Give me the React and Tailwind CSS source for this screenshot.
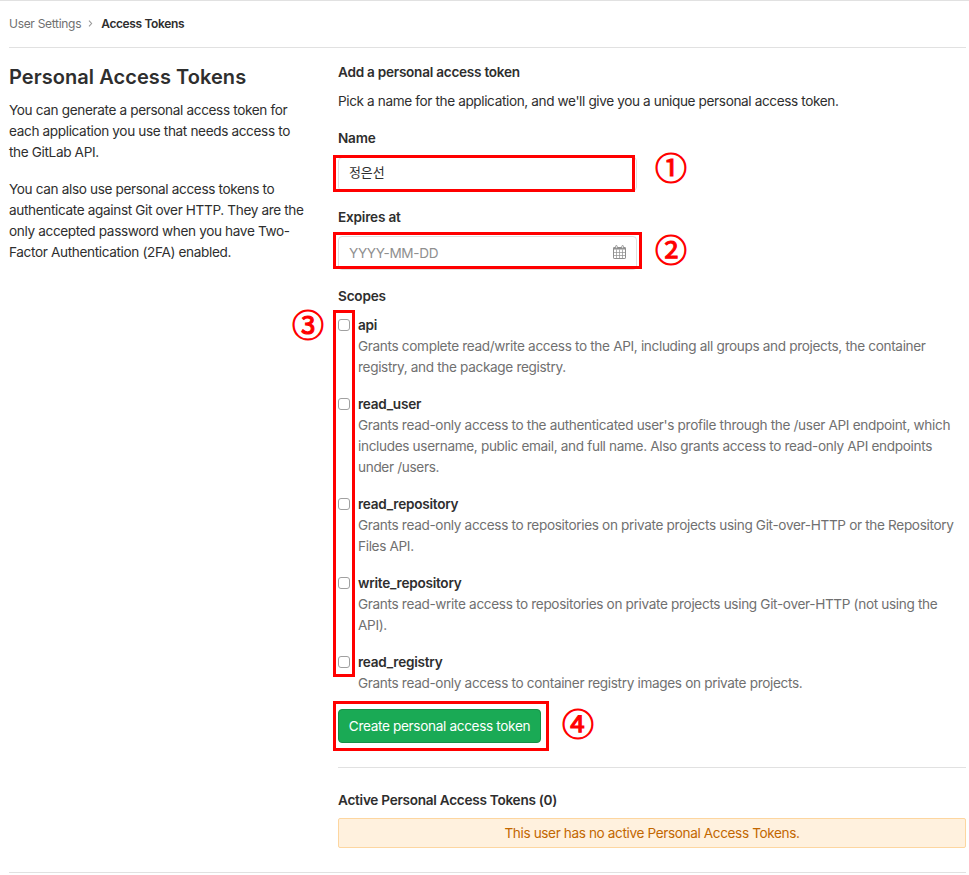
const scopes = [
  { name: "api", lines: ["Grants complete read/write access to the API, including all groups and projects, the container", "registry, and the package registry."] },
  { name: "read_user", lines: ["Grants read-only access to the authenticated user's profile through the /user API endpoint, which", "includes username, public email, and full name. Also grants access to read-only API endpoints", "under /users."] },
  { name: "read_repository", lines: ["Grants read-only access to repositories on private projects using Git-over-HTTP or the Repository", "Files API."] },
  { name: "write_repository", lines: ["Grants read-write access to repositories on private projects using Git-over-HTTP (not using the", "API)."] },
  { name: "read_registry", lines: ["Grants read-only access to container registry images on private projects."] },
];

function Lines({ lines }) {
  return lines.map((line) => (
    <span key={line} className="block whitespace-nowrap">{line}</span>
  ));
}

function CalendarIcon() {
  return (
    <svg className="mb-[2px]" width="13" height="14" viewBox="0 0 13 14" fill="none" stroke="#8f8f8f">
      <rect x="0.5" y="2.5" width="12" height="11" rx="0.6" />
      <path d="M1 7.5h11M1 10.5h11M3.5 4.5v9M6.5 4.5v9M9.5 4.5v9" strokeWidth="0.7" />
      <path d="M0.5 3.5h12" strokeWidth="2" />
      <rect x="2.6" y="0.5" width="1.6" height="3" rx="0.8" fill="#fff" strokeWidth="0.9" />
      <rect x="8.8" y="0.5" width="1.6" height="3" rx="0.8" fill="#fff" strokeWidth="0.9" />
    </svg>
  );
}

function Marker({ children, className }) {
  return (
    <span className={`absolute size-8 text-center font-['Noto_Sans_CJK_KR',sans-serif] text-[32px] leading-8 font-normal tracking-normal text-[#ff0000] [-webkit-text-stroke:1px_#ff0000] ${className}`}>
      {children}
    </span>
  );
}

export default function App() {
  return (
    <div className="relative h-[875px] w-[969px] overflow-hidden border-t border-[#e1e1e1] bg-white pr-[3px] pl-[9px] font-[Inter,'Noto_Sans_CJK_KR',sans-serif] text-[13.6px] leading-[21px] tracking-[-0.34px] text-[#2e2e2e]">
      <nav className="flex h-[47px] items-center border-b border-[#e1e1e1] pb-px text-[12px]">
        <span className="tracking-[-0.3px] text-[#707070]">User Settings</span>
        <svg className="mr-[8px] ml-[7px]" width="5" height="7" viewBox="0 0 5 7" fill="none" stroke="#999" strokeWidth="1.1">
          <path d="M1 0.7l2.6 2.8L1 6.3" />
        </svg>
        <span className="font-semibold tracking-[-0.37px]">Access Tokens</span>
      </nav>

      <div className="flex h-[825px] border-b border-[#e1e1e1]">
        <aside className="w-[329px] pt-4">
          <h4 className="text-[20px] leading-[26px] font-semibold tracking-[0.06px]">Personal Access Tokens</h4>
          <p className="mt-[10px] tracking-[-0.36px]">
            <Lines lines={["You can generate a personal access token for", "each application you use that needs access to", "the GitLab API."]} />
          </p>
          <p className="mt-4 tracking-[-0.36px]">
            <Lines lines={["You can also use personal access tokens to", "authenticate against Git over HTTP. They are the", "only accepted password when you have Two-", "Factor Authentication (2FA) enabled."]} />
          </p>
        </aside>

        <main className="flex w-[628px] flex-col pt-[14px]">
          <h5 className="font-semibold tracking-[-0.26px]">Add a personal access token</h5>
          <p className="mt-2 tracking-[-0.38px] whitespace-nowrap">Pick a name for the application, and we'll give you a unique personal access token.</p>

          <div className="mt-4 font-semibold tracking-[-0.2px]">Name</div>
          <div className="relative mt-2 flex h-[34px] w-[299px] items-center rounded border border-[#dfdfdf] px-[10px] pb-[3px] text-[13px] tracking-[-0.1px]">
            정은선
            <div className="absolute -top-[3px] -left-[6px] h-[37px] w-[302px] border-3 border-[#ff0000]" />
            <Marker className="-top-[8px] left-[316px]">①</Marker>
          </div>

          <div className="mt-[16px] font-semibold tracking-[-0.2px]">Expires at</div>
          <div className="relative mt-2 flex h-[34px] w-[299px] items-center justify-between rounded border border-[#dfdfdf] pr-[10px] pl-[10px] text-[#8f8f8f]">
            YYYY-MM-DD
            <CalendarIcon />
            <div className="absolute -top-[5px] -left-[6px] h-[37px] w-[309px] border-3 border-[#ff0000]" />
            <Marker className="-top-[5px] left-[316px]">②</Marker>
          </div>

          <div className="mt-[16px] font-semibold tracking-[-0.2px]">Scopes</div>
          <div className="relative mt-2 flex flex-col gap-4">
            {scopes.map((scope) => (
              <div key={scope.name} className="flex">
                <input type="checkbox" className="mt-[4px] mr-2 size-3 shrink-0 appearance-none rounded-[3px] border border-[#a0a0a0] bg-white" />
                <div>
                  <div className="font-semibold tracking-[-0.25px]">{scope.name}</div>
                  <p className="text-[#707070]"><Lines lines={scope.lines} /></p>
                </div>
              </div>
            ))}
            <div className="absolute -top-[5px] -left-[5px] h-[367px] w-[22px] border-3 border-[#ff0000]" />
            <Marker className="-top-[8px] -left-[46px]">③</Marker>
          </div>

          <div className="relative mt-[15px] w-fit">
            <button className="block h-[34px] w-[203px] rounded border border-[#168f48] bg-[#1aaa55] text-center whitespace-nowrap text-white">Create personal access token</button>
            <div className="absolute -top-2 -left-[5px] h-[50px] w-[216px] border-3 border-[#ff0000]" />
            <Marker className="-top-[3px] left-[224px]">④</Marker>
          </div>

          <div className="mt-6 border-t border-[#e1e1e1] pt-[22px]">
            <h5 className="font-semibold tracking-[-0.27px]">Active Personal Access Tokens (0)</h5>
            <div className="mt-[7px] h-[30px] rounded-xs border border-[#fdd6a0] bg-[#fff1de] text-center leading-[28px] tracking-[-0.38px] text-[#c26700]">
              This user has no active Personal Access Tokens.
            </div>
          </div>
        </main>
      </div>
    </div>
  );
}
